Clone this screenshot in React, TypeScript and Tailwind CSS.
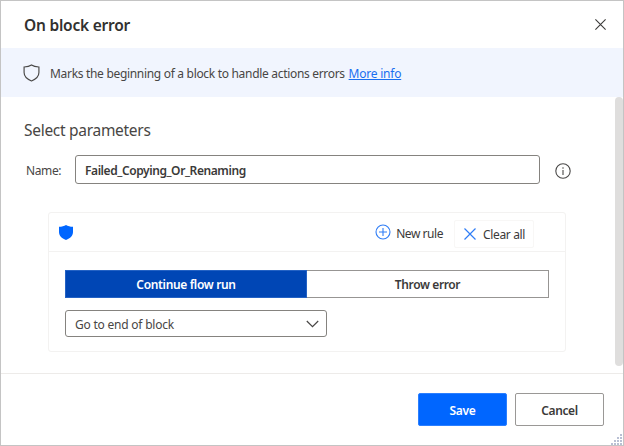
import React from 'react';

const shieldPath =
  'M8 1C6.200 2.200 3.800 2.700 1 2.800v5.200c0 3.800 2.600 6.200 7 8 4.400-1.800 7-4.200 7-8V2.800C12.200 2.700 9.800 2.200 8 1Z';

const gripDots = [
  [9, 0], [6, 3], [9, 3], [3, 6], [6, 6], [9, 6], [0, 9], [3, 9], [6, 9], [9, 9],
];

function Header() {
  return (
    <header className="flex h-[47px] shrink-0 items-center justify-between pl-[23px] pr-[17px]">
      <h1 className="text-[15.5px] font-semibold leading-5 tracking-[-0.23px] text-[#323130]">On block error</h1>
      <button aria-label="Close">
        <svg width="11" height="11" viewBox="0 0 11 11" fill="none" stroke="#3b3a39" strokeWidth="1.1">
          <path d="M.4.4l10.200 10.200M10.600.4.4 10.600" />
        </svg>
      </button>
    </header>
  );
}

function Banner() {
  return (
    <div className="flex h-[49px] shrink-0 items-center bg-[#f1f5fe] pl-[22px]">
      <svg width="17" height="18" viewBox="0 0 16 17" fill="none" stroke="#4a4948" strokeWidth="1.1">
        <path d={shieldPath} />
      </svg>
      <p className="ml-[10px] mt-[2px] whitespace-nowrap text-[12px] leading-4 tracking-[-0.31px] text-[#484644]">
        Marks the beginning of a block to handle actions errors{' '}
        <a className="ml-px tracking-[-0.23px] text-[#1a6ff0] underline">More info</a>
      </p>
    </div>
  );
}

function RuleCard() {
  return (
    <section className="ml-[48px] mt-[28px] h-[140px] w-[518px] rounded-[3px] border border-[#f3f2f1]">
      <div className="flex h-[39px] items-center border-b border-[#f3f2f1] pl-[9px] pr-[31px]">
        <svg width="16" height="17" viewBox="0 0 16 17" fill="#0066ff">
          <path d={shieldPath} />
        </svg>
        <button className="ml-auto flex items-center whitespace-nowrap text-[12px] text-[#3b3a39]">
          <svg width="16" height="16" viewBox="0 0 16 16" fill="none" stroke="#2f7df6" strokeWidth="1.1">
            <circle cx="8" cy="8" r="7" />
            <path d="M8 4v8M4 8h8" />
          </svg>
          <span className="ml-[5px] mt-[3px] tracking-[-0.45px]">New rule</span>
        </button>
        <button className="ml-[11px] mt-[3px] flex h-[28px] w-[80px] items-center whitespace-nowrap rounded-[2px] border border-[#f8f7f6] pl-[9px] text-[12px] text-[#3b3a39]">
          <svg width="12" height="12" viewBox="0 0 12 12" fill="none" stroke="#2f7df6" strokeWidth="1.2">
            <path d="M.5.5l11 11M11.500.5l-11 11" />
          </svg>
          <span className="ml-[7px] mt-[2px] tracking-[-0.35px]">Clear all</span>
        </button>
      </div>
      <div className="px-[16px] pt-[18px]">
        <div className="flex h-[28px] w-[484px] text-[12px] font-semibold">
          <button className="w-[242px] border border-[#2462c4] bg-[#0046b5] pt-[2px] tracking-[-0.34px] text-white">Continue flow run</button>
          <button className="w-[242px] border border-l-0 border-[#979593] pt-[2px] tracking-[-0.38px] text-[#3b3a39]">Throw error</button>
        </div>
        <div className="mt-[12px] flex h-[27px] w-[262px] items-center justify-between rounded-[3px] border border-[#85837f] pl-[9px] pr-[7px] text-[12px] text-[#484644]">
          <span className="mt-[2px] tracking-[-0.22px]">Go to end of block</span>
          <svg width="13" height="8" viewBox="0 0 13 8" fill="none" stroke="#484644" strokeWidth="1.2">
            <path d="M.8 1l5.700 5.700L12.200 1" />
          </svg>
        </div>
      </div>
    </section>
  );
}

export default function App() {
  return (
    <main className="relative flex h-[446px] w-[624px] flex-col overflow-hidden border border-[#c4c4c4] bg-white font-['Noto_Sans','Open_Sans',sans-serif]">
      <Header />
      <Banner />
      <div className="flex h-[277px] shrink-0 justify-between border-b border-[#edebe9]">
        <div className="-ml-px">
          <h2 className="ml-[24px] mt-[22px] text-[15.5px] leading-[22px] tracking-[-0.29px] text-[#484644]">Select parameters</h2>
          <div className="mt-[14px] flex h-[29px] items-center">
            <label className="w-[75px] pl-[26px] pt-[2px] text-[12px] tracking-[-0.38px] text-[#484644]">Name:</label>
            <input
              className="h-[29px] w-[465px] rounded-[3px] border border-[#85837f] px-[9px] pt-[2px] text-[12px] font-semibold tracking-[-0.42px] text-[#3b3a39] outline-none"
              defaultValue="Failed_Copying_Or_Renaming"
            />
            <svg className="ml-[15px] mt-[2px]" width="16" height="16" viewBox="0 0 16 16" fill="none" stroke="#4a4948" strokeWidth="1.1">
              <circle cx="8" cy="8" r="7.200" />
              <path d="M8 7v5M8 4.300v1.400" />
            </svg>
          </div>
          <RuleCard />
        </div>
        <div className="h-[269px] w-[8px] rounded-full bg-[#dfdedd]" />
      </div>
      <footer className="flex flex-1 items-start justify-end gap-[8px] pr-[19px] pt-[19px] text-[12px] font-semibold">
        <button className="h-[33px] w-[89px] rounded-[2px] border border-[#2b7fff] bg-[#0066ff] pt-[2px] tracking-[-0.3px] text-white">Save</button>
        <button className="h-[33px] w-[89px] rounded-[2px] border border-[#9a9896] pt-[2px] tracking-[-0.4px] text-[#3b3a39]">Cancel</button>
      </footer>
      <svg className="absolute bottom-0 right-0" width="12" height="12" viewBox="0 0 12 12" fill="#b9c0d4">
        {gripDots.map(([x, y]) => (
          <rect key={`${x}-${y}`} x={x} y={y + 1} width="2" height="2" />
        ))}
      </svg>
    </main>
  );
}
